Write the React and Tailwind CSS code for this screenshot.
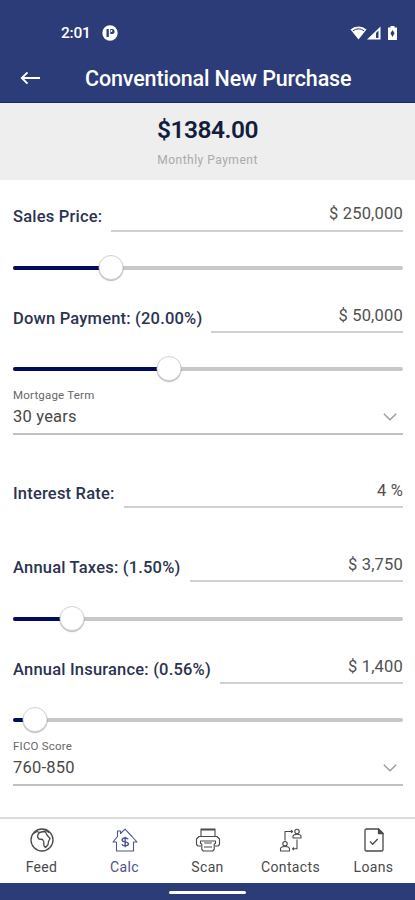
const AmountRow = ({ label, value, className }) => (
  <div className={`flex gap-[9px] ${className}`}>
    <label className="pt-[15px] text-[16.5px] leading-5 font-medium tracking-[0.2px] whitespace-nowrap text-[#2b3350]">
      {label}
    </label>
    <div className="flex-1 border-b-2 border-[#d0d0d0] pt-[12px] text-right text-[16.5px] leading-5 tracking-[0.2px] text-[#505050]">
      {value}
    </div>
  </div>
);

const Slider = ({ percent }) => (
  <div className="relative flex h-[27px] items-center">
    <div className="h-[4px] w-full overflow-hidden rounded-full bg-[#c8c8c8]">
      <div className="h-full bg-[#030b5c]" style={{ width: `${percent}%` }} />
    </div>
    <div
      className="absolute top-[1px] h-[25px] w-[25px] -translate-x-1/2 rounded-full border border-[#d2d2d2] bg-white shadow-[0_1px_1px_rgba(0,0,0,0.28)]"
      style={{ left: `${percent}%` }}
    />
  </div>
);

const SelectRow = ({ label, value }) => (
  <div className="h-[53px] border-b-2 border-[#c0c0c0]">
    <div className="pt-[6px] text-[11.5px] leading-[14px] tracking-[0.2px] text-[#666]">{label}</div>
    <div className="flex items-center justify-between pt-[5px] pr-[6px] text-[16.5px] leading-5 tracking-[0.2px] text-[#484848]">
      {value}
      <svg className="h-[8px] w-[14px]" viewBox="0 0 14 8" fill="none" stroke="#999" strokeWidth="1.3">
        <path d="M0.8 0.8 7 6.8l6.2-6" />
      </svg>
    </div>
  </div>
);

const FeedIcon = () => (
  <svg className="h-6 w-6" viewBox="0 0 24 24" fill="none" stroke="currentColor" strokeWidth="1.3" strokeLinejoin="round">
    <circle cx="12" cy="12" r="11" />
    <path d="M3.500 5.500 7 3.500 9.500 4.500l4-1 2 .5 1.500 3 3 3.500-1.500 3-.5 3.200-2.500 2.800-1.500-1.500-.3-4.500-1.200-2-3.500-.5-1.500-2L8 6.500l1.500-2M14 1.500l3.500 2 1.500 1.300" />
  </svg>
);

const CalcIcon = () => (
  <svg className="h-6 w-[26px]" viewBox="0 0 26 24" fill="none" stroke="currentColor" strokeWidth="1.1" strokeLinejoin="round">
    <path d="M4.5 14v9h17v-9H25l-5-5.500L13 1.200 8.500 5.500V3h-3v5.500L1 14h3.500" />
    <path d="M16.200 11.200c-.4-.8-1.500-1.200-3-1.200-1.900 0-3.100.7-3.100 1.900 0 2.800 6.300 1.200 6.300 3.900 0 1.300-1.300 2-3.200 2-1.700 0-2.900-.5-3.300-1.700M13.200 8.700v10.500" strokeWidth="1.4" />
  </svg>
);

const ScanIcon = () => (
  <svg className="h-6 w-[26px]" viewBox="0 0 26 24" fill="none" stroke="currentColor" strokeWidth="1.1" strokeLinejoin="round">
    <path d="M6 8.500V1h14v7.500M6 2h14M6 18H3l-1.500-1.500V11L4 8.500h18l2.500 2.500v5.500L23 18h-3" />
    <path d="M5.500 13h15v2.200l-1.300 1v5.300l-1.500 1.500H8.300l-1.500-1.500v-5.300l-1.300-1zM9.200 15h7.600M9 19h8" />
  </svg>
);

const ContactsIcon = () => (
  <svg className="h-6 w-6" viewBox="0 0 24 24" fill="none" stroke="currentColor" strokeWidth="1.1" strokeLinejoin="round">
    <circle cx="6" cy="15.700" r="2.200" />
    <path d="M1.500 23v-2c0-1.700 1.500-2.500 4.500-2.500s4.500.8 4.500 2.500v2z" />
    <circle cx="18" cy="3.500" r="2.200" />
    <path d="M14 10v-1.500c0-1.500 1.300-2.300 4-2.300s4 .8 4 2.300V10z" />
    <path d="M6 12.500V3.500h7.500M12.200 2.200l1.300 1.300-1.300 1.300M18 11.500v9.300h-4.500M14.800 19.500l-1.300 1.300 1.300 1.300" />
  </svg>
);

const LoansIcon = () => (
  <svg className="h-6 w-5" viewBox="0 0 20 24" fill="none" stroke="currentColor" strokeWidth="1.3" strokeLinejoin="round">
    <path d="M2 1h12.500L19 5.500V22l-1 1H2l-1-1V2z" />
    <path d="M14.500 1v4.500H19z" fill="currentColor" />
    <path d="m6 13.500 2.700 2.700 5-5.200" />
  </svg>
);

const tabs = [
  { name: "Feed", Icon: FeedIcon },
  { name: "Calc", Icon: CalcIcon, active: true },
  { name: "Scan", Icon: ScanIcon },
  { name: "Contacts", Icon: ContactsIcon },
  { name: "Loans", Icon: LoansIcon },
];

const StatusBar = () => (
  <div className="flex h-[56px] items-end justify-between pr-[17px] pb-[14px] pl-[61px] text-white">
    <div className="flex items-center gap-[11px]">
      <span className="text-[15.5px] leading-[18px] font-medium tracking-[-0.2px]">2:01</span>
      <svg className="h-4 w-4" viewBox="0 0 16 16">
        <circle cx="8" cy="8" r="7.700" fill="white" />
        <path d="M4.500 4h2.300v8H4.500zM4.500 4H10a2.500 2.500 0 0 1 0 5H8.300V4z" fill="#2b3c78" />
        <circle cx="9.500" cy="6" r="0.900" fill="white" />
      </svg>
    </div>
    <div className="flex items-center pb-px">
      <svg className="h-4 w-[17px]" viewBox="0 0 17 16">
        <path d="M0.500 4.500a12 12 0 0 1 16 0L8.500 14.500z" fill="white" />
        <path d="M2.800 5.900a9 9 0 0 1 11.400 0" fill="none" stroke="#2b3c78" strokeWidth="1" />
      </svg>
      <svg className="h-4 w-[14px]" viewBox="0 0 14 16">
        <path d="M0 14.500 13.500 1.500v13z" fill="white" />
        <path d="M9 8 11.500 5.500v7.500H9z" fill="#2b3c78" />
      </svg>
      <svg className="ml-[6px] h-4 w-[11px]" viewBox="0 0 11 16">
        <path d="M1 2.500h2.500V1h4v1.500H10V15H1z" fill="white" />
        <path d="M5.500 5 7.500 8.300 5.500 12 3.500 8.300z" fill="#2b3c78" />
      </svg>
    </div>
  </div>
);

const App = () => {
  return (
    <div className="flex h-[900px] w-[415px] flex-col overflow-hidden bg-white font-[Roboto,sans-serif]">
      <header className="h-[103px] shrink-0 border-b border-[#12296b] bg-[#2b3c78] text-white">
        <StatusBar />
        <div className="flex items-center pl-[20px]">
          <svg className="-mt-[3px] h-[14px] w-[21px]" viewBox="0 0 21 14" fill="none" stroke="white" strokeWidth="1.9">
            <path d="M20 7H2M7.500 1.300 1.800 7l5.700 5.700" />
          </svg>
          <h1 className="ml-[44px] text-[21.5px] leading-[46px] font-medium tracking-[-0.14px] whitespace-nowrap">
            Conventional New Purchase
          </h1>
        </div>
      </header>

      <section className="flex h-[77px] shrink-0 flex-col items-center bg-[#eee] pt-[13px]">
        <div className="text-[24.5px] leading-7 font-semibold tracking-[-0.5px] text-[#131d3c]">$1384.00</div>
        <div className="mt-[8px] text-[12px] leading-4 tracking-[0.5px] text-[#aaa]">Monthly Payment</div>
      </section>

      <main className="flex-1 pr-[12px] pl-[13px]">
        <AmountRow className="mt-[12px] h-[40px]" label="Sales Price:" value="$ 250,000" />
        <div className="mt-[22px]">
          <Slider percent={25} />
        </div>
        <AmountRow className="mt-[13px] h-[39px]" label="Down Payment: (20.00%)" value="$ 50,000" />
        <div className="mt-[22px]">
          <Slider percent={40} />
        </div>
        <SelectRow label="Mortgage Term" value="30 years" />
        <AmountRow className="mt-[34px] h-[39px]" label="Interest Rate:" value="4 %" />
        <AmountRow className="mt-[35px] h-[39px]" label="Annual Taxes: (1.50%)" value="$ 3,750" />
        <div className="mt-[23px]">
          <Slider percent={15} />
        </div>
        <AmountRow className="mt-[13px] h-[39px]" label="Annual Insurance: (0.56%)" value="$ 1,400" />
        <div className="mt-[22px]">
          <Slider percent={5.6} />
        </div>
        <SelectRow label="FICO Score" value="760-850" />
      </main>

      <nav className="grid h-[66px] shrink-0 grid-cols-5 border-t-2 border-[#ddd] bg-white">
        {tabs.map(({ name, Icon, active }) => (
          <div
            key={name}
            className={`flex flex-col items-center pt-[9px] ${active ? "text-[#4b568f]" : "text-[#4a4a4a]"}`}
          >
            <Icon />
            <span className="mt-[7px] text-[14px] leading-4 tracking-[0.35px]">{name}</span>
          </div>
        ))}
      </nav>
      <div className="flex h-[17px] shrink-0 justify-center bg-[#2b3c78] pt-[8px]">
        <div className="h-[3px] w-[77px] rounded-full bg-white" />
      </div>
    </div>
  );
};

export default App;
